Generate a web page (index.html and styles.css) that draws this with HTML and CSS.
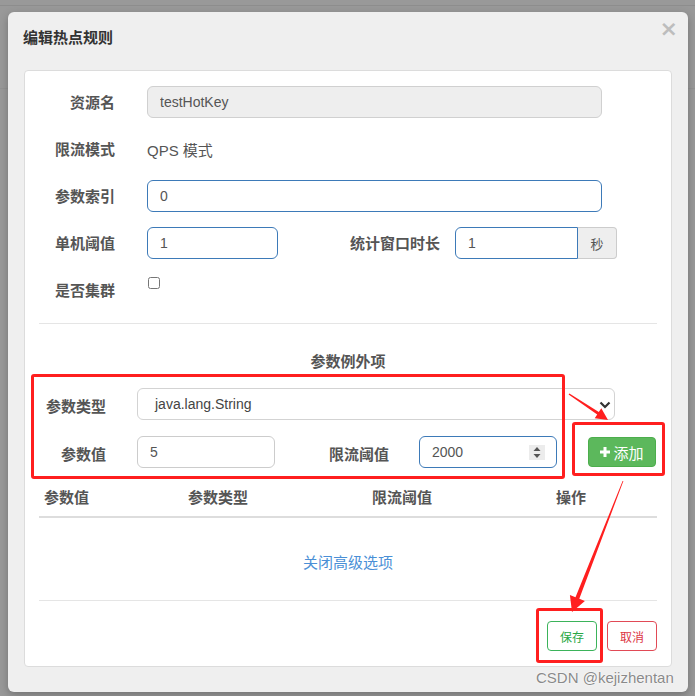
FILE: index.html
```html
<!DOCTYPE html>
<html lang="zh-CN">
<head>
<meta charset="utf-8">
<title>编辑热点规则</title>
<link rel="stylesheet" href="styles.css">
</head>
<body>
<div class="stage">
  <div class="backdrop-line line-a"></div>
  <div class="backdrop-line line-b"></div>
  <div class="modal">
    <div class="modal-header">
      <h4 class="modal-title">编辑热点规则</h4>
      <span class="close">×</span>
    </div>
    <div class="modal-body">
      <div class="panel">
        <div class="form-row">
          <label class="lbl">资源名</label>
          <input class="ctl ctl-wide ctl-disabled" value="testHotKey" disabled>
        </div>
        <div class="form-row">
          <label class="lbl">限流模式</label>
          <span class="static">QPS 模式</span>
        </div>
        <div class="form-row">
          <label class="lbl">参数索引</label>
          <input class="ctl ctl-wide ctl-focus" value="0">
        </div>
        <div class="form-row">
          <label class="lbl">单机阈值</label>
          <input class="ctl ctl-small ctl-focus" value="1">
          <label class="lbl lbl-mid">统计窗口时长</label>
          <div class="input-group">
            <input class="ctl ctl-group ctl-focus" value="1">
            <span class="addon">秒</span>
          </div>
        </div>
        <div class="form-row form-row-last">
          <label class="lbl">是否集群</label>
          <input type="checkbox" class="chk">
        </div>

        <hr class="sep sep-top">

        <div class="section-title">参数例外项</div>

        <div class="ex-row">
          <label class="ex-lbl">参数类型</label>
          <div class="select-wrap">
            <div class="select">java.lang.String</div>
            <svg class="chevron" width="12" height="8" viewBox="0 0 12 8"><path d="M1.5 1.5 L6 6 L10.5 1.5" fill="none" stroke="#333" stroke-width="2.2"/></svg>
          </div>
        </div>
        <div class="ex-row ex-row-2">
          <label class="ex-lbl">参数值</label>
          <input class="ctl ctl-ex" value="5">
          <label class="ex-lbl ex-lbl-mid">限流阈值</label>
          <div class="num-wrap">
            <input class="ctl ctl-ex ctl-focus" value="2000">
            <svg class="spinner" width="16" height="15" viewBox="0 0 16 15"><rect width="16" height="15" fill="#ececec"/><path d="M4.5 6 L8 2 L11.5 6 Z" fill="#555"/><path d="M4.5 9 L8 13 L11.5 9 Z" fill="#555"/></svg>
          </div>
          <button class="btn-add"><svg class="plus" width="10" height="10" viewBox="0 0 10 10"><path d="M3.5 0h3v3.5H10v3H6.5V10h-3V6.5H0v-3h3.5z" fill="#fff"/></svg>添加</button>
        </div>

        <div class="table-head">
          <span class="th">参数值</span>
          <span class="th">参数类型</span>
          <span class="th">限流阈值</span>
          <span class="th">操作</span>
        </div>

        <div class="toggle-link">关闭高级选项</div>

        <hr class="sep sep-bottom">

        <div class="footer">
          <button class="btn btn-save">保存</button>
          <button class="btn btn-cancel">取消</button>
        </div>
      </div>
    </div>
  </div>

  <div class="mark mark-1"></div>
  <div class="mark mark-2"></div>
  <div class="mark mark-3"></div>
  <svg class="arrows" width="695" height="696" viewBox="0 0 695 696">
    <polygon points="568.6,394.4 569.4,393.6 598.8,412.1 601.3,408.3 608,420 594.7,418.3 597.2,414.5" fill="#ff1f1f"/>
    <polygon points="622.6,481 623.4,481 579.3,598.7 584.9,600.9 572,612 569.9,595.1 575.5,597.3" fill="#ff1f1f"/>
  </svg>
  <div class="watermark">CSDN @kejizhentan</div>
</div>
</body>
</html>
```

FILE: styles.css
```css
* { box-sizing: border-box; }

html, body {
  margin: 0;
  padding: 0;
  background: #999999;
  overflow: hidden;
}

body {
  font-family: "Liberation Sans", "Noto Sans CJK SC", sans-serif;
  font-size: 14px;
  color: #555;
}

.stage {
  position: relative;
  width: 695px;
  height: 696px;
  padding: 12px 0 0 8px;
  overflow: hidden;
}

.backdrop-line {
  position: absolute;
  left: 0;
  width: 695px;
  height: 1px;
  background: #8d8d8d;
}
.line-a { top: 5px; }
.line-b { top: 88px; background: #939393; }

.modal {
  position: relative;
  width: 680px;
  background: #efefef;
  border-radius: 6px;
  box-shadow: 0 3px 9px rgba(0, 0, 0, 0.25);
}

.modal-header {
  display: flex;
  justify-content: space-between;
  align-items: flex-start;
  padding: 16px 10px 0 15px;
  height: 58px;
}

.modal-title {
  margin: 0;
  font-size: 15px;
  line-height: 20px;
  font-weight: 700;
  color: #333;
}

.close {
  font-family: "DejaVu Sans", sans-serif;
  font-size: 22px;
  line-height: 20px;
  font-weight: 700;
  color: #bdbdbd;
  margin-top: -9px;
}

.modal-body {
  padding: 0 16px 25px 16px;
}

.panel {
  background: #fff;
  border: 1px solid #dcdcdc;
  border-radius: 4px;
  padding: 15px 14px 15px 14px;
}

.form-row {
  display: flex;
  align-items: flex-start;
  height: 32px;
  margin-bottom: 15px;
}

.form-row-last { margin-bottom: 0; }

.lbl {
  width: 108px;
  flex: none;
  padding: 7px 32px 0 0;
  text-align: right;
  font-size: 15px;
  line-height: 20px;
  font-weight: 700;
  color: #555;
}

.lbl-mid {
  width: 177px;
  padding-right: 15px;
}

.static {
  padding-top: 8px;
  font-size: 15px;
  line-height: 20px;
  color: #555;
}

.ctl {
  height: 32px;
  padding: 0 12px;
  border: 1px solid #ccc;
  border-radius: 6px;
  font-family: "Liberation Sans", "Noto Sans CJK SC", sans-serif;
  font-size: 14px;
  color: #555;
  background: #fff;
  outline: none;
}

.ctl-wide { width: 455px; }
.ctl-small { width: 131px; }
.ctl-disabled { background: #eeeeee; color: #555; border-color: #d0d0d0; }
.ctl-focus { border-color: #3d7ab8; }

.input-group {
  display: flex;
}

.ctl-group {
  width: 123px;
  border-radius: 6px 0 0 6px;
}

.addon {
  width: 39px;
  height: 32px;
  display: flex;
  align-items: center;
  justify-content: center;
  background: #eee;
  border: 1px solid #ccc;
  border-left: none;
  border-radius: 0 4px 4px 0;
  font-size: 13px;
  color: #555;
}

.chk {
  margin: 3px 0 0 1px;
  width: 12px;
  height: 12px;
}

.sep {
  border: 0;
  border-top: 1px solid #e5e5e5;
  margin: 0;
}

.sep-top { margin-top: 17px; }

.section-title {
  margin-top: 28px;
  text-align: center;
  font-size: 15px;
  line-height: 20px;
  font-weight: 700;
  color: #555;
}

.ex-row {
  display: flex;
  align-items: flex-start;
  height: 32px;
  margin-top: 16px;
}

.ex-row-2 { margin-top: 16px; }

.ex-lbl {
  width: 98px;
  flex: none;
  padding: 9px 31px 0 0;
  text-align: right;
  font-size: 15px;
  line-height: 20px;
  font-weight: 700;
  color: #555;
}

.ex-lbl-mid {
  width: 144px;
  padding-right: 30px;
}

.select-wrap {
  position: relative;
  width: 478px;
}

.select {
  height: 32px;
  line-height: 30px;
  padding-left: 17px;
  border: 1px solid #d3d3d3;
  border-radius: 6px;
  font-size: 14px;
  color: #444;
}

.chevron {
  position: absolute;
  right: 4px;
  top: 13px;
}

.ctl-ex { width: 138px; }

.num-wrap {
  position: relative;
}

.spinner {
  position: absolute;
  right: 12px;
  top: 9px;
}

.btn-add {
  margin: 1px 0 0 31px;
  width: 68px;
  height: 30px;
  display: flex;
  align-items: center;
  justify-content: center;
  gap: 3px;
  padding: 0;
  background: #5cb85c;
  border: 1px solid #4cae4c;
  border-radius: 4px;
  color: #fff;
  font-family: "Liberation Sans", "Noto Sans CJK SC", sans-serif;
  font-size: 15px;
}

.plus { flex: none; }

.table-head {
  display: grid;
  grid-template-columns: 144px 184px 184px 1fr;
  margin-top: 12px;
  border-bottom: 2px solid #dddddd;
}

.th {
  padding: 8px 5px;
  font-size: 15px;
  line-height: 20px;
  font-weight: 700;
  color: #555;
}

.toggle-link {
  margin-top: 35px;
  text-align: center;
  font-size: 15px;
  line-height: 20px;
  color: #4a8fd6;
}

.sep-bottom { margin-top: 27px; }

.footer {
  display: flex;
  justify-content: flex-end;
  gap: 10px;
  margin-top: 20px;
}

.btn {
  width: 50px;
  height: 30px;
  padding: 0;
  background: #fff;
  border-radius: 4px;
  font-family: "Liberation Sans", "Noto Sans CJK SC", sans-serif;
  font-size: 12px;
}

.btn-save { border: 1px solid #3bb35a; color: #28a745; }
.btn-cancel { border: 1px solid #e14a56; color: #dc3545; }

.mark {
  position: absolute;
  border: 3px solid #ff1f1f;
  border-radius: 3px;
}

.mark-1 { left: 31px; top: 374px; width: 534px; height: 105px; }
.mark-2 { left: 572px; top: 422px; width: 93px; height: 54px; }
.mark-3 { left: 536px; top: 608px; width: 67px; height: 55px; }

.arrows {
  position: absolute;
  left: 0;
  top: 0;
  pointer-events: none;
}

.watermark {
  position: absolute;
  left: 536px;
  top: 668px;
  font-size: 15px;
  line-height: 20px;
  color: #8a8a8a;
  text-shadow: 0 0 2px #fff, 0 0 1px #fff;
}
```
